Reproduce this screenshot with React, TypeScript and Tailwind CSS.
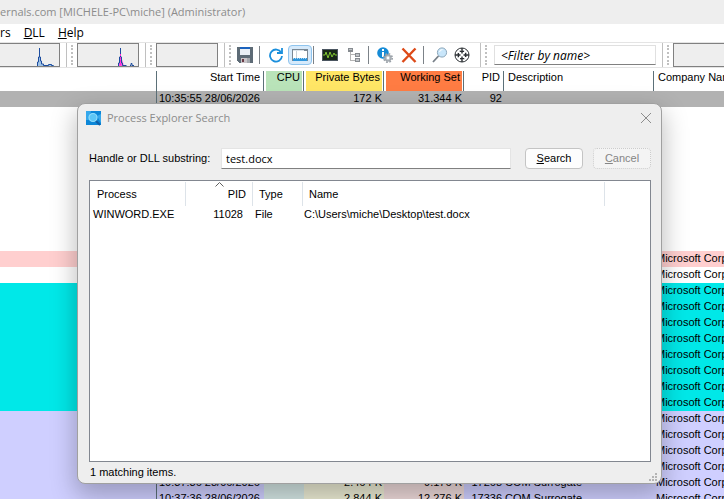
import { useState } from "react";
import type { ReactNode } from "react";

type Row = {
  color: string;
  started?: string;
  privateBytes?: string;
  workingSet?: string;
  pid?: string;
  description?: string;
  company?: string;
  tinted?: boolean;
};

const emptyRow: Row = { color: "bg-white" };
const microsoft = "Microsoft Corp";

const rows: Row[] = [
  { color: "bg-[#b2b2b2]", started: "10:35:55 28/06/2026", privateBytes: "172 K", workingSet: "31.344 K", pid: "92" },
  ...Array(9).fill(emptyRow),
  { color: "bg-[#ffcfcf]", company: microsoft },
  { color: "bg-white", company: microsoft },
  ...Array(8).fill({ color: "bg-[#00e8e8]", company: microsoft }),
  ...Array(4).fill({ color: "bg-[#cfcfff]", company: microsoft }),
  { color: "bg-[#cfcfff]", started: "10:37:36 28/06/2026", privateBytes: "2.464 K", workingSet: "9.176 K", pid: "17268", description: "COM Surrogate", company: microsoft, tinted: true },
  { color: "bg-[#cfcfff]", started: "10:37:36 28/06/2026", privateBytes: "2.844 K", workingSet: "12.276 K", pid: "17336", description: "COM Surrogate", company: microsoft, tinted: true },
];

const columns = [
  { label: "", width: "w-[157px]", color: "", align: "text-right" },
  { label: "Start Time", width: "w-[107px]", color: "", align: "text-right" },
  { label: "CPU", width: "w-10", color: "bg-[#b9e3b9]", align: "text-right" },
  { label: "Private Bytes", width: "w-20", color: "bg-[#ffe666]", align: "text-right" },
  { label: "Working Set", width: "w-20", color: "bg-[#ff7c43]", align: "text-right" },
  { label: "PID", width: "w-10", color: "", align: "text-right" },
  { label: "Description", width: "w-[150px]", color: "", align: "text-left" },
  { label: "Company Name", width: "w-auto", color: "", align: "text-left" },
];

function Grip() {
  return (
    <>
      <span className="ml-1.5 h-6 w-[5px] shrink-0 border-l border-[#c0c0c0]" />
      <span className="mr-1 h-5 w-0 shrink-0 border-l-2 border-dotted border-[#c0c0c0]" />
    </>
  );
}

function Divider() {
  return <span className="mr-2 ml-1.5 h-[18px] w-px shrink-0 bg-[#7c8288]" />;
}

function Graph({ children, className }: { children?: ReactNode; className: string }) {
  return (
    <div className={`h-6 shrink-0 border border-[#808080] bg-[#eeeeee] ${className}`}>
      {children}
    </div>
  );
}

function ToolButton({ label, children, className = "" }: { label: string; children: ReactNode; className?: string }) {
  return (
    <button aria-label={label} className={`flex h-5 shrink-0 items-center justify-center ${className}`}>
      {children}
    </button>
  );
}

function SaveIcon() {
  return (
    <svg width="16" height="16" viewBox="0 0 16 16" shapeRendering="crispEdges">
      <path d="M0 0h16v16H2l-2-2z" fill="#5d6b76" />
      <path d="M3 0h10v8H3z" fill="#e9eff5" />
      <path d="M3 0h10v2H3z" fill="#1b62bd" />
      <path d="M4 11h9v5H4z" fill="#c9c5c9" />
      <path d="M5 12h2v3H5z" fill="#6b3c46" />
      <path d="M10 11h3v5h-3z" fill="#a5a9ae" />
    </svg>
  );
}

function RefreshIcon() {
  return (
    <svg width="16" height="16" viewBox="0 0 16 16" fill="none" stroke="#1b8fdc" strokeWidth="1.8">
      <path d="M13.2 5.5A6 6 0 1 0 14 9" />
      <path d="M14 1v5H9" />
    </svg>
  );
}

function PaneIcon() {
  return (
    <svg width="16" height="12" viewBox="0 0 16 12" shapeRendering="crispEdges">
      <path d="M0 0h16v12H0z" fill="#7b8894" />
      <path d="M1 2h14v9H1z" fill="#fff" />
      <path d="M1 1h11v1H1z" fill="#dbe3ea" />
      <path d="M4 2h1v7H4z" fill="#c9d2da" />
      <path d="M1 9h14v3H1z" fill="#2f96dc" />
      <path d="M1 9.5h14" stroke="#a8d6f5" strokeDasharray="1 1" />
    </svg>
  );
}

function ActivityIcon() {
  return (
    <svg width="16" height="12" viewBox="0 0 16 12">
      <path d="M0 0h16v12H0z" fill="#4b5560" />
      <path d="M1 1h14v10H1z" fill="#182818" />
      <path d="M1 6h2l1-3 2 6 2-6 2 5 2-4 1 2h2" fill="none" stroke="#7fc531" />
    </svg>
  );
}

function TreeIcon() {
  return (
    <svg width="12" height="14" viewBox="0 0 12 14" shapeRendering="crispEdges">
      <path d="M2 3h1v9h4v1H2zM3 6h4v1H3z" fill="#b4b4b4" />
      <path d="M0 0h5v4H0zM7 5h5v4H7zM7 10h5v4H7z" fill="#868b90" />
      <path d="M1 1h3v1H1zM8 6h3v2H8zM8 11h3v2H8z" fill="#c0c4c8" />
    </svg>
  );
}

function InfoGearIcon() {
  return (
    <svg width="16" height="16" viewBox="0 0 16 16">
      <circle cx="6" cy="6" r="5.8" fill="#168bd6" />
      <path d="M5 2h2v2H5zM5 5h2v5H5z" fill="#fff" />
      <circle cx="11" cy="11" r="4.2" fill="none" stroke="#9aa1a8" strokeWidth="1.6" strokeDasharray="1.8 1.5" />
      <circle cx="11" cy="11" r="3.2" fill="#b4bac0" stroke="#9aa1a8" />
      <circle cx="11" cy="11" r="1.4" fill="#fff" />
    </svg>
  );
}

function KillIcon() {
  return (
    <svg width="16" height="16" viewBox="0 0 16 16" fill="none" stroke="#dd4a18" strokeWidth="2.4">
      <path d="M1.5 1.5 14.5 15M14.5 1.5 1.5 15" />
    </svg>
  );
}

function FindIcon() {
  return (
    <svg width="16" height="16" viewBox="0 0 16 16">
      <path d="M1 15l5.5-6" stroke="#777f87" strokeWidth="1.8" />
      <circle cx="10" cy="5.5" r="4.6" fill="#c9e6fa" stroke="#8ba6ba" />
      <path d="M7.5 5a3 3 0 0 1 3-2.4" fill="none" stroke="#fff" />
    </svg>
  );
}

function TargetIcon() {
  return (
    <svg width="16" height="16" viewBox="0 0 16 16" fill="none" stroke="#2a2e32">
      <circle cx="8" cy="8" r="7" fill="#fff" />
      <circle cx="8" cy="8" r="4.6" stroke="#8a8e92" strokeDasharray="2 1.6" strokeWidth="0.8" />
      <path d="M8 1v5.500M8 9.500V15M1 8h5.500M9.500 8H15" strokeWidth="1.4" />
      <path d="M6 4.500h4M6 11.500h4M4.500 6v4M11.500 6v4" strokeWidth="1.2" />
    </svg>
  );
}

function SearchAppIcon() {
  return (
    <svg width="15" height="15" viewBox="0 0 15 15">
      <path d="M0 0h15v14H0z" fill="#0c87d8" />
      <path d="M0 0h5L3 9H0zM11 5l4-2v9z" fill="#35a8ec" />
      <path d="M9.500 9.500 14 14" stroke="#0f5ea8" strokeWidth="2" />
      <circle cx="7" cy="6.500" r="4" fill="#5cc6f6" stroke="#8fdcfb" strokeWidth="1.200" />
    </svg>
  );
}

function Toolbar() {
  return (
    <div className="flex h-[26px] items-center overflow-hidden border-y border-[#e4e4e4] bg-white">
      <Graph className="w-[60px] border-l-0">
        <svg className="ml-auto" width="25" height="22" viewBox="0 0 25 22">
          <path d="M3 22v-4h1v-5h1V5h1v8h1v4h1v3h2v1h5v-1h3v1h2v1z" fill="#9ec2e6" />
          <path d="M3.500 22v-4h1v-5h1V4v9h1v4h1v3h2v1.500h5v-1h3v1h2" fill="none" stroke="#1d4d9f" />
        </svg>
      </Graph>
      <Grip />
      <Graph className="w-[62px]">
        <svg className="ml-auto" width="21" height="22" viewBox="0 0 21 22">
          <path d="M1 22l3-10 3 10z" fill="#ff4fe0" />
          <path d="M1.500 22v-3h1v-6h1V4v9h1v6h1v2.500h4M13 21.500h1v-2h1v2h2" fill="none" stroke="#1d4d9f" />
          <path d="M3.500 10v11" stroke="#ff28d8" strokeDasharray="2 1" />
        </svg>
      </Graph>
      <Grip />
      <Graph className="w-[62px]" />
      <Grip />
      <ToolButton label="Save" className="ml-0.5"><SaveIcon /></ToolButton>
      <Divider />
      <ToolButton label="Refresh now"><RefreshIcon /></ToolButton>
      <ToolButton label="Show lower pane" className="ml-1 w-6 rounded-sm border border-[#8fc4ee] bg-[#d6eafb]"><PaneIcon /></ToolButton>
      <span className="mr-2 ml-px h-[18px] w-px shrink-0 bg-[#7c8288]" />
      <ToolButton label="System information"><ActivityIcon /></ToolButton>
      <ToolButton label="Show process tree" className="ml-2 w-4"><TreeIcon /></ToolButton>
      <Divider />
      <ToolButton label="Properties"><InfoGearIcon /></ToolButton>
      <ToolButton label="Kill process" className="ml-2"><KillIcon /></ToolButton>
      <Divider />
      <ToolButton label="Find handle or DLL"><FindIcon /></ToolButton>
      <ToolButton label="Find window's process" className="mr-1 ml-1.5"><TargetIcon /></ToolButton>
      <Grip />
      <input
        aria-label="Filter by name"
        placeholder="<Filter by name>"
        className="ml-[3px] h-5 w-[162px] shrink-0 border border-b-[#808080] border-[#e0e0e0] bg-white px-1.5 font-['Open_Sans',sans-serif] text-[12px] italic outline-none placeholder:text-black"
      />
      <Grip />
      <Graph className="flex-1 border-r-0" />
    </div>
  );
}

function ProcessTable() {
  return (
    <table className="mt-[3px] w-full table-fixed border-collapse text-[11px] leading-[14px] whitespace-nowrap">
      <thead className="leading-3">
        <tr className="h-5">
          {columns.map((c, i) => (
            <th key={i} className={`p-0 align-top font-normal ${c.width} ${c.align}`}>
              <div className={`flex h-5 ${i < 7 ? "border-r border-[#5c7078]" : ""}`}>
                <span className={`mr-px ml-0.5 flex-1 px-0.5 ${c.color}`}>{c.label}</span>
              </div>
            </th>
          ))}
        </tr>
      </thead>
      <tbody className="align-top">
        {rows.map((r, i) => (
          <tr key={i} className={`h-4 ${r.color}`}>
            <td className="p-0">
              <div className={`h-4 ${r.started ? "border-r border-[#5c7078]" : ""}`} />
            </td>
            <td className="p-0 pl-0.5">{r.started}</td>
            <td className={`p-0 ${r.tinted ? "bg-[#d4e6e4]" : ""}`} />
            <td className={`p-0 pr-0.5 text-right ${r.tinted ? "bg-[#ececd4]" : ""}`}>{r.privateBytes}</td>
            <td className={`p-0 pr-0.5 text-right ${r.tinted ? "bg-[#eedada]" : ""}`}>{r.workingSet}</td>
            <td className="p-0 pr-0.5 text-right">{r.pid}</td>
            <td className="p-0 pl-px">{r.description}</td>
            <td className="p-0 pl-0.5">{r.company}</td>
          </tr>
        ))}
      </tbody>
    </table>
  );
}

function SearchDialog() {
  const [query, setQuery] = useState("test.docx");

  return (
    <div
      role="dialog"
      aria-label="Process Explorer Search"
      className="absolute top-[103px] right-[62px] bottom-[15px] left-[77px] flex flex-col rounded-lg border border-[#a0a0a0] bg-[#eeeeee] pr-2.5 pl-[11px] shadow-[0_10px_24px_2px_rgba(0,0,0,0.25)]"
    >
      <div className="flex h-7 items-center">
        <span className="-ml-[3px]"><SearchAppIcon /></span>
        <h2 className="ml-1.5 flex-1 font-['Open_Sans',sans-serif] text-[11px] text-[#8c8c8c]">Process Explorer Search</h2>
        <button aria-label="Close" className="-mr-px">
          <svg width="12" height="12" viewBox="0 0 12 12" fill="none" stroke="#8c8c8c">
            <path d="M1 1l10 10M11 1 1 11" />
          </svg>
        </button>
      </div>

      <div className="mt-4 flex h-[21px] items-center text-[11px]">
        <label htmlFor="substring" className="w-[132px] shrink-0 whitespace-nowrap">Handle or DLL substring:</label>
        <input
          id="substring"
          value={query}
          onChange={(e) => setQuery(e.target.value)}
          className="h-[21px] min-w-0 flex-1 border border-b-[#808080] border-[#e4e4e4] bg-white px-1 font-['Open_Sans',sans-serif] text-[11px] outline-none"
        />
        <button className="ml-3.5 h-[21px] w-[58px] rounded border border-[#c4c4c4] bg-[#fdfdfd]">
          <span className="underline">S</span>earch
        </button>
        <button disabled className="ml-2.5 h-[21px] w-[58px] rounded border border-dotted border-[#cccccc] bg-[#f4f4f4] text-[#858585]">
          <span className="underline">C</span>ancel
        </button>
      </div>

      <div className="mt-[11px] flex-1 border border-[#828790] bg-white pt-px">
        <table className="w-full table-fixed border-separate border-spacing-0 text-[11px] leading-4 whitespace-nowrap">
          <thead>
            <tr className="h-6 text-left">
              <th className="w-24 border-r border-[#dde3e9] p-0 pl-[7px] font-normal">Process</th>
              <th className="relative w-[67px] border-r border-[#dde3e9] p-0 pr-1.5 text-right font-normal">
                <svg className="absolute top-0 left-[29px]" width="9" height="5" viewBox="0 0 9 5" fill="none" stroke="#606060">
                  <path d="M.5 4.500l4-4 4 4" />
                </svg>
                PID
              </th>
              <th className="w-[50px] border-r border-[#dde3e9] p-0 pl-1.5 font-normal">Type</th>
              <th className="w-[302px] border-r border-[#dde3e9] p-0 pl-1.5 font-normal">Name</th>
              <th className="p-0" />
            </tr>
          </thead>
          <tbody>
            <tr>
              <td className="p-0 pl-[3px]">WINWORD.EXE</td>
              <td className="p-0 pr-2.5 text-right">11028</td>
              <td className="p-0 pl-0.5">File</td>
              <td className="p-0 pl-px">{"C:\\Users\\miche\\Desktop\\test.docx"}</td>
              <td />
            </tr>
          </tbody>
        </table>
      </div>

      <div className="flex h-[21px] items-center pl-px text-[11px]">
        <span className="flex-1">1 matching items.</span>
        <svg className="-mr-2 self-end" width="10" height="10" viewBox="0 0 10 10" fill="#b4b4b4">
          <path d="M6 0h2v2H6zM3 3h2v2H3zM6 3h2v2H6zM0 6h2v2H0zM3 6h2v2H3zM6 6h2v2H6z" />
        </svg>
      </div>
    </div>
  );
}

export default function App() {
  return (
    <div className="relative h-screen overflow-hidden bg-white font-['Liberation_Sans',sans-serif] text-black">
      <header className="flex h-6 items-center bg-[#eeeeee] font-['Open_Sans',sans-serif] text-[11px] whitespace-nowrap text-[#8c8c8c]">
        ernals.com [MICHELE-PC\miche] (Administrator)
      </header>
      <nav className="flex h-[18px] items-center gap-[13px] font-['Open_Sans',sans-serif] text-[12px]">
        <button>rs</button>
        <button><span className="underline">D</span>LL</button>
        <button><span className="underline">H</span>elp</button>
      </nav>
      <Toolbar />
      <ProcessTable />
      <SearchDialog />
    </div>
  );
}
